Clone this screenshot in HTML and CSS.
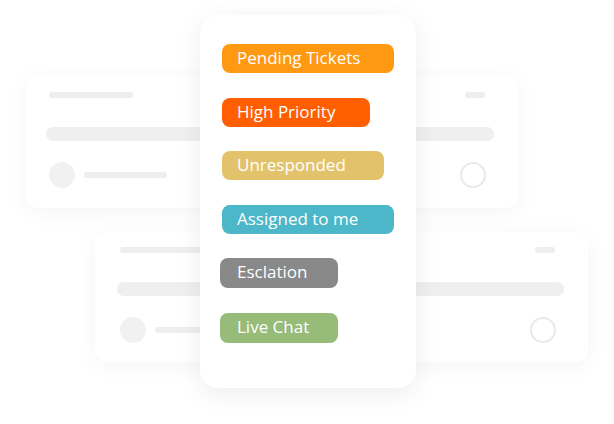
FILE: index.html
```html
<!DOCTYPE html>
<html>
<head>
<meta charset="utf-8">
<link rel="stylesheet" href="styles.css">
</head>
<body>
<div class="stage">
  <div class="card back back-1">
    <div class="row top">
      <span class="line short"></span>
      <span class="pill"></span>
    </div>
    <div class="bar"></div>
    <div class="row bottom">
      <div class="who">
        <span class="dot"></span>
        <span class="line medium"></span>
      </div>
      <span class="ring"></span>
    </div>
  </div>
  <div class="card back back-2">
    <div class="row top">
      <span class="line short"></span>
      <span class="pill"></span>
    </div>
    <div class="bar"></div>
    <div class="row bottom">
      <div class="who">
        <span class="dot"></span>
        <span class="line medium"></span>
      </div>
      <span class="ring"></span>
    </div>
  </div>
  <div class="card front">
    <span class="tag tag-pending">Pending Tickets</span>
    <span class="tag tag-high">High Priority</span>
    <span class="tag tag-unres">Unresponded</span>
    <span class="tag tag-assigned">Assigned to me</span>
    <span class="tag tag-esc">Esclation</span>
    <span class="tag tag-live">Live Chat</span>
  </div>
</div>
</body>
</html>
```

FILE: styles.css
```css
html, body {
  margin: 0;
  padding: 0;
  background: #ffffff;
}
body {
  font-family: "Open Sans", Lato, sans-serif;
}
.stage {
  position: relative;
  width: 614px;
  height: 424px;
  overflow: hidden;
}
.card {
  background: #ffffff;
  box-sizing: border-box;
}
.back {
  position: absolute;
  width: 492px;
  height: 132px;
  border-radius: 12px;
  box-shadow: 0 4px 22px rgba(0, 0, 0, 0.045);
  padding: 16px 24px 0 20px;
  display: flex;
  flex-direction: column;
}
.back-1 { left: 26px; top: 76px; }
.back-2 { left: 95px; top: 232px; width: 493px; height: 130px; padding-top: 15px; padding-left: 22px; }
.row {
  display: flex;
  justify-content: space-between;
  align-items: center;
}
.line {
  display: block;
  height: 6px;
  border-radius: 3px;
  background: #eeeeee;
}
.line.short { width: 84px; margin-left: 3px; }
.line.medium { width: 83px; }
.pill {
  width: 20px;
  height: 6px;
  border-radius: 3px;
  background: #eeeeee;
  margin-right: 9px;
}
.bar {
  margin-top: 29px;
  height: 14px;
  border-radius: 7px;
  background: #efefef;
}
.bottom { margin-top: 21px; }
.who {
  display: flex;
  align-items: center;
  gap: 9px;
  margin-left: 3px;
}
.dot {
  width: 26px;
  height: 26px;
  border-radius: 50%;
  background: #f1f1f1;
}
.ring {
  box-sizing: border-box;
  width: 26px;
  height: 26px;
  border-radius: 50%;
  border: 2px solid #e9e9e9;
  margin-right: 8px;
}
.front {
  position: absolute;
  left: 200px;
  top: 15px;
  width: 216px;
  height: 373px;
  border-radius: 18px;
  box-shadow: 0 6px 26px rgba(0, 0, 0, 0.07);
  padding: 29px 0 0 22px;
  display: flex;
  flex-direction: column;
  align-items: flex-start;
  gap: 24.6px;
}
.tag {
  box-sizing: border-box;
  height: 29px;
  line-height: 27px;
  padding-bottom: 2px;
  border-radius: 8px;
  padding-left: 15px;
  color: #ffffff;
  font-size: 17px;
  font-weight: 500;
  white-space: nowrap;
}
.tag-pending { width: 172px; background: #ff9911; }
.tag-high { width: 148px; background: #ff5f00; }
.tag-unres { width: 162px; background: #e2c36c; }
.tag-assigned { width: 172px; background: #4bb7c8; }
.tag-esc { width: 118px; background: #898989; margin-left: -2px; padding-left: 17px; height: 30px; line-height: 28px; }
.tag-live { width: 118px; background: #97bb78; margin-left: -2px; padding-left: 17px; height: 30px; line-height: 28px; }
```
